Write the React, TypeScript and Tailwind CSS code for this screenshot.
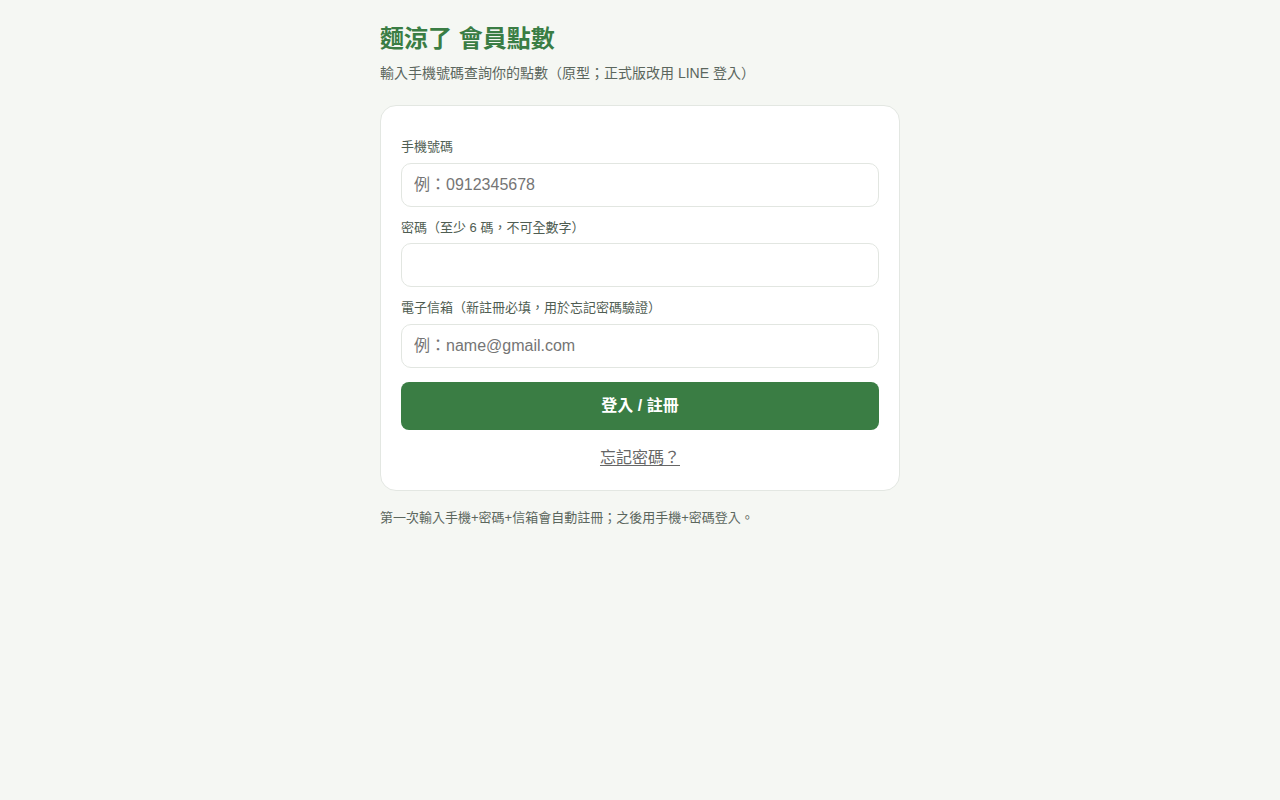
import React, { useState } from 'react';

const FONT = '"Liberation Sans", "Noto Sans CJK TC", sans-serif';

interface FieldProps {
    label: string;
    type?: string;
    placeholder?: string;
    value: string;
    onChange: (v: string) => void;
}

function Field({ label, type = 'text', placeholder, value, onChange }: FieldProps) {
    return (
        <div className="mt-3">
            <label className="block text-[13px] leading-[18.5px] text-[#4f5d52] mb-1.5">{label}</label>
            <input
                type={type}
                value={value}
                placeholder={placeholder}
                onChange={(e) => onChange(e.target.value)}
                className="block w-full h-[44px] px-3 rounded-[10px] border border-[#e2e6e1] bg-white text-[16px] text-[#333] placeholder:text-[#757575] outline-none focus:border-[#3a7d44]"
            />
        </div>
    );
}

export default function App() {
    const [phone, setPhone] = useState('');
    const [password, setPassword] = useState('');
    const [email, setEmail] = useState('');

    return (
        <div className="min-h-screen bg-[#f5f7f3]" style={{ fontFamily: FONT }}>
            <div className="w-[520px] mx-auto pt-6">
                <h1 className="text-[24px] leading-[29px] font-bold text-[#3a7d44]">麵涼了 會員點數</h1>
                <p className="mt-[10px] text-[14px] leading-[20px] text-[#5b665d]">
                    輸入手機號碼查詢你的點數（原型；正式版改用 LINE 登入）
                </p>

                {/* Login card */}
                <div className="mt-[22px] bg-white border border-[#e3e7e2] rounded-[16px] px-5 pt-5 pb-5">
                    <Field label="手機號碼" placeholder="例：0912345678" value={phone} onChange={setPhone} />
                    <Field label="密碼（至少 6 碼，不可全數字）" type="password" value={password} onChange={setPassword} />
                    <Field label="電子信箱（新註冊必填，用於忘記密碼驗證）" placeholder="例：name@gmail.com" value={email} onChange={setEmail} />

                    <button className="mt-[14px] w-full h-[48px] rounded-[8px] bg-[#3a7d44] text-white text-[16px] font-bold">
                        登入 / 註冊
                    </button>
                    <div className="mt-4 text-center">
                        <button className="text-[16px] leading-[24px] text-[#666] underline underline-offset-2">忘記密碼？</button>
                    </div>
                </div>

                <p className="mt-[17px] text-[13px] leading-[19px] text-[#5b665d]">
                    第一次輸入手機+密碼+信箱會自動註冊；之後用手機+密碼登入。
                </p>
            </div>
        </div>
    );
}
